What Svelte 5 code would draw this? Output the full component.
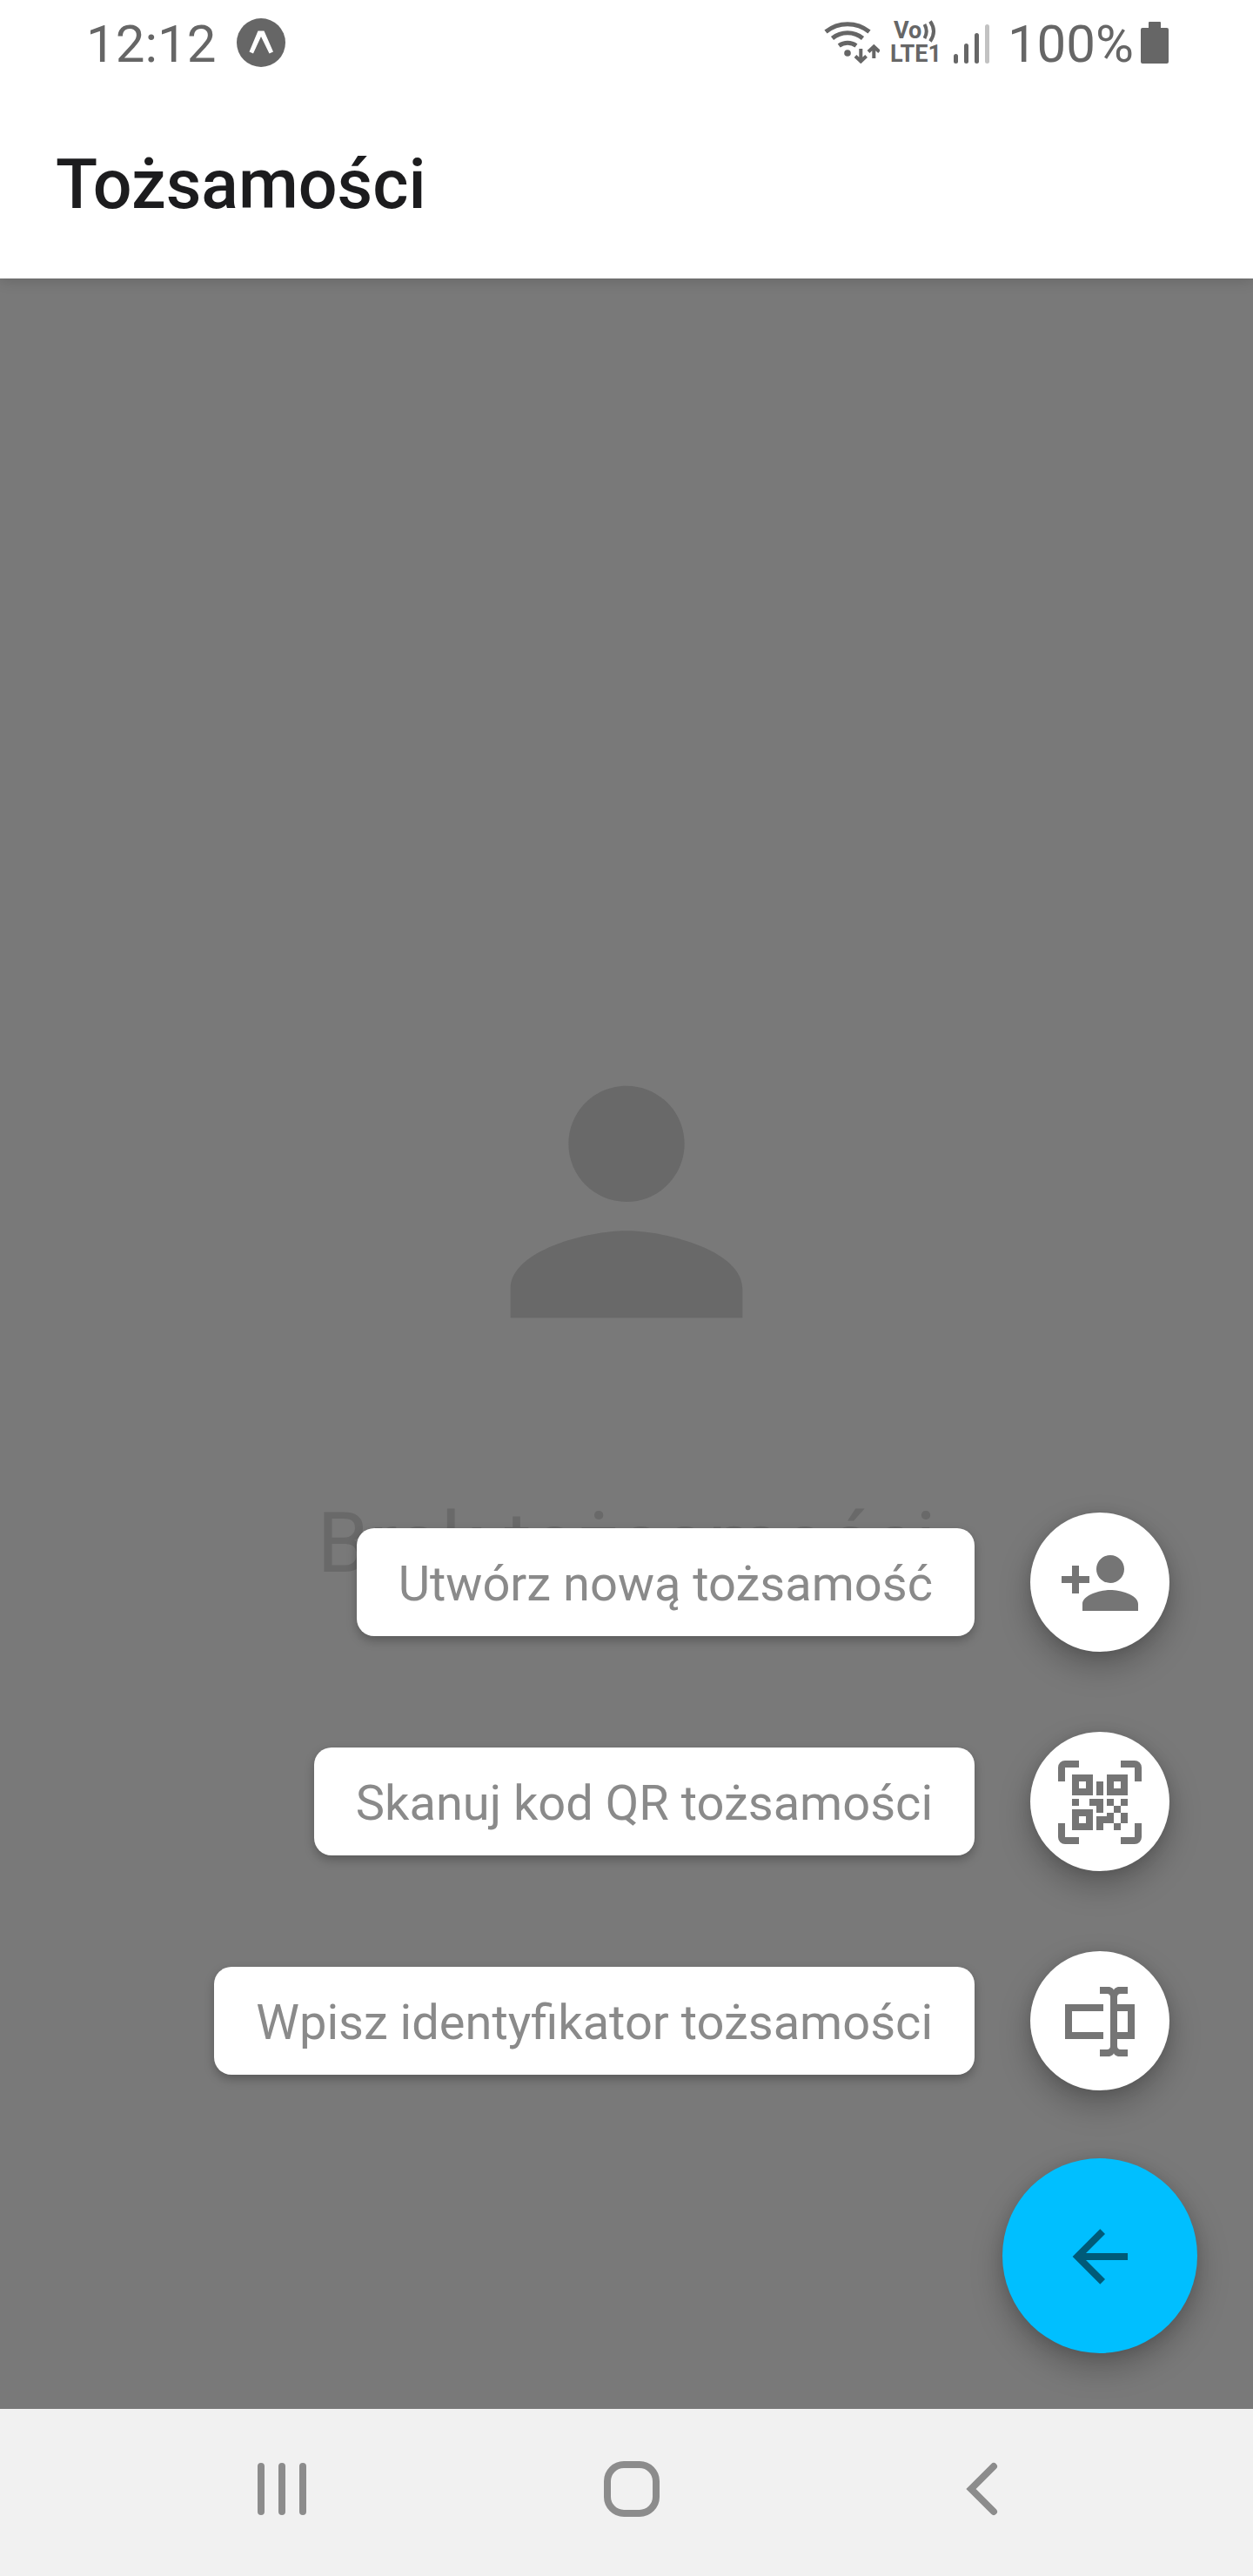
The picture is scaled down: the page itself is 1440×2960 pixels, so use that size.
<script>
  const actions = [
    {
      label: 'Utwórz nową tożsamość',
      icon: 'M15 12c2.21 0 4-1.79 4-4s-1.79-4-4-4-4 1.79-4 4 1.79 4 4 4zm-9-2V7H4v3H1v2h3v3h2v-3h3v-2H6zm9 4c-2.67 0-8 1.34-8 4v2h16v-2c0-2.66-5.33-4-8-4z',
    },
    {
      label: 'Skanuj kod QR tożsamości',
      icon: 'M4,4H10V10H4V4M20,4V10H14V4H20M14,15H16V13H14V11H16V13H18V11H20V13H18V15H20V18H18V20H16V18H13V20H11V16H14V15M16,15V18H18V15H16M4,20V14H10V20H4M6,6V8H8V6H6M16,6V8H18V6H16M6,16V18H8V16H6M4,11H6V13H4V11M9,11H13V15H11V13H9V11M11,6H13V10H11V6M2,2V6H0V2A2,2 0 0,1 2,0H6V2H2M22,0A2,2 0 0,1 24,2V6H22V2H18V0H22M2,18V22H6V24H2A2,2 0 0,1 0,22V18H2M22,22V18H24V22A2,2 0 0,1 22,24H18V22H22Z',
    },
    {
      label: 'Wpisz identyfikator tożsamości',
      icon: 'M17,7H22V17H17V19A1,1 0 0,0 18,20H20V22H17.5C16.95,22 16,21.55 16,21C16,21.55 15.05,22 14.5,22H12V20H14A1,1 0 0,0 15,19V5A1,1 0 0,0 14,4H12V2H14.5C15.05,2 16,2.45 16,3C16,2.45 16.95,2 17.5,2H20V4H18A1,1 0 0,0 17,5V7M2,7H13V9H4V15H13V17H2V7M20,15V9H17V15H20Z',
    },
  ];
</script>

<div class="screen">
  <header class="top">
    <div class="status">
      <div class="status-left">
        <span class="status-text">12:12</span>
        <svg class="expo" viewBox="0 0 56 56" aria-hidden="true">
          <circle cx="28" cy="28" r="28" fill="#666" />
          <path d="M24.5 14.5h7L42 38.5l-4.500 2L28 21l-9 19.500-4.500-2z" fill="#fff" />
        </svg>
      </div>
      <div class="status-right">
        <svg class="wifi" viewBox="0 0 64 48" fill="none" stroke="#666" aria-hidden="true">
          <g stroke-width="5">
            <path d="M2 11.500A40 40 0 0 1 52 11.500" />
            <path d="M9.500 19A28 28 0 0 1 44.500 19" />
            <path d="M17.200 27.500A17 17 0 0 1 37 27.500" />
          </g>
          <circle cx="27" cy="36" r="3.800" fill="#666" stroke="none" />
          <path d="M42.300 31v14M36 39.500l6.300 6 6.300-6M57.300 42V28M51 34.500l6.300-6 6.300 6" stroke-width="4" />
        </svg>
        <div class="volte">
          <span class="vo">
            Vo
            <svg class="waves" viewBox="0 0 16 26" fill="none" stroke="#666" stroke-width="4" aria-hidden="true">
              <path d="M1.500 5Q6 13 1.500 21M8 1.500Q16 13 8 24.500" />
            </svg>
          </span>
          <span>LTE1</span>
        </div>
        <svg class="signal" viewBox="0 0 42 48" fill="#666" aria-hidden="true">
          <rect x="0" y="37" width="5" height="11" rx="2.500" />
          <rect x="12" y="25" width="5" height="23" rx="2.500" />
          <rect x="24" y="13" width="5" height="35" rx="2.500" />
          <rect x="36" y="3" width="5" height="45" rx="2.500" fill="#c2c2c2" />
        </svg>
        <span class="status-text">100%</span>
        <svg class="battery" viewBox="0 0 32 48" fill="#666" aria-hidden="true">
          <path d="M10 0h12q1 0 1 1v6h7q2 0 2 2v37q0 2-2 2H2q-2 0-2-2V9q0-2 2-2h7V1q0-1 1-1z" />
        </svg>
      </div>
    </div>
    <h1>Tożsamości</h1>
  </header>

  <main>
    <section class="empty">
      <svg viewBox="0 0 24 24" aria-hidden="true">
        <path d="M12 12c2.210 0 4-1.790 4-4s-1.790-4-4-4-4 1.790-4 4 1.790 4 4 4zm0 2c-2.670 0-8 1.340-8 4v2h16v-2c0-2.660-5.330-4-8-4z" />
      </svg>
      <p>Brak tożsamości</p>
    </section>

    <div class="menu">
      <div class="actions">
        {#each actions as action}
          <button type="button" class="action">
            <span class="label">{action.label}</span>
            <span class="round">
              <svg class="icon" viewBox="0 0 24 24" aria-hidden="true"><path fill-rule="evenodd" d={action.icon} /></svg>
            </span>
          </button>
        {/each}
      </div>
      <button type="button" class="fab" aria-label="Zamknij">
        <svg class="icon" viewBox="0 0 24 24" aria-hidden="true">
          <path d="M20,11V13H8L13.5,18.5L12.08,19.92L4.16,12L12.08,4.08L13.5,5.5L8,11H20Z" />
        </svg>
      </button>
    </div>
  </main>

  <nav>
    <button type="button" aria-label="Ostatnie">
      <svg viewBox="0 0 64 64" aria-hidden="true">
        <path d="M8 6v52M32 6v52M56 6v52" />
      </svg>
    </button>
    <button type="button" aria-label="Ekran główny">
      <svg viewBox="0 0 64 64" aria-hidden="true">
        <rect x="4" y="4" width="56" height="56" rx="19" />
      </svg>
    </button>
    <button type="button" aria-label="Wstecz">
      <svg viewBox="0 0 64 64" aria-hidden="true">
        <path d="M46 6L20 32l26 26" />
      </svg>
    </button>
  </nav>
</div>

<style>
  :global(body) {
    margin: 0;
  }

  .screen {
    display: flex;
    flex-direction: column;
    min-height: 100vh;
    background: #797979;
    font-family: Roboto, 'Noto Sans', sans-serif;
  }

  button {
    border: 0;
    margin: 0;
    padding: 0;
    background: none;
    font: inherit;
    cursor: pointer;
  }

  svg {
    display: block;
    flex: none;
  }

  .top {
    position: relative;
    z-index: 1;
    background: #fff;
    box-shadow: 0 2px 16px rgba(0, 0, 0, 0.16);
  }

  .status {
    display: flex;
    justify-content: space-between;
    align-items: center;
    height: 98px;
    padding: 0 97px 0 99px;
    color: #666;
  }

  .status-left,
  .status-right {
    display: flex;
    align-items: center;
  }

  .status-left {
    gap: 24px;
  }

  .status-text {
    padding-top: 4px;
    font-size: 60px;
    line-height: 72px;
  }

  .expo {
    width: 56px;
    height: 56px;
  }

  .wifi {
    width: 64px;
    height: 48px;
  }

  .volte {
    display: flex;
    flex-direction: column;
    margin-left: 12px;
    font-size: 27px;
    font-weight: 700;
    line-height: 27px;
  }

  .vo {
    display: flex;
    align-items: center;
    gap: 2px;
    padding-left: 4px;
  }

  .waves {
    width: 16px;
    height: 26px;
  }

  .signal {
    width: 42px;
    height: 48px;
    margin-left: 14px;
    margin-right: 20px;
  }

  .battery {
    width: 32px;
    height: 48px;
    margin-left: 8px;
  }

  h1 {
    margin: 0;
    padding: 66px 64px 60px;
    color: #1c1c1e;
    font-size: 79px;
    font-weight: 500;
    line-height: 96px;
  }

  main {
    flex: 1;
    display: grid;
  }

  .empty,
  .menu {
    grid-area: 1 / 1;
    display: flex;
    flex-direction: column;
  }

  .empty {
    align-items: center;
    justify-content: center;
    padding-bottom: 70px;
    color: #696969;
  }

  .empty svg {
    width: 400px;
    height: 400px;
    fill: #696969;
  }

  .empty p {
    margin: 128px 0 0;
    font-size: 96px;
    line-height: 128px;
  }

  .menu {
    z-index: 1;
    align-items: flex-end;
    justify-content: flex-end;
    gap: 78px;
    padding: 64px;
  }

  .actions {
    display: flex;
    flex-direction: column;
    align-items: flex-end;
    gap: 92px;
    padding-right: 32px;
  }

  .action {
    display: flex;
    align-items: center;
    gap: 64px;
  }

  .label {
    padding: 28px 48px 24px;
    border-radius: 20px;
    background: #fff;
    box-shadow: 0 5px 12px rgba(0, 0, 0, 0.26);
    color: #8a8a8a;
    font-size: 56px;
    line-height: 72px;
  }

  .round,
  .fab {
    box-sizing: border-box;
    display: flex;
    align-items: center;
    justify-content: center;
    padding-top: 2px;
    border-radius: 50%;
    box-shadow:
      0 16px 36px rgba(0, 0, 0, 0.26),
      0 2px 16px rgba(0, 0, 0, 0.1);
  }

  .round {
    width: 160px;
    height: 160px;
    background: #fff;
    fill: #757575;
  }

  .fab {
    width: 224px;
    height: 224px;
    background: #00bfff;
    fill: #005a78;
  }

  .icon {
    width: 96px;
    height: 96px;
  }

  nav {
    position: relative;
    z-index: 1;
    display: flex;
    height: 192px;
    padding: 0 111px 0 123px;
    background: #f1f1f1;
  }

  nav button {
    flex: 1;
    display: flex;
    align-items: center;
    justify-content: center;
    padding-bottom: 8px;
  }

  nav svg {
    width: 64px;
    height: 64px;
    fill: none;
    stroke: #8c8c8c;
    stroke-width: 8;
    stroke-linecap: round;
  }
</style>
